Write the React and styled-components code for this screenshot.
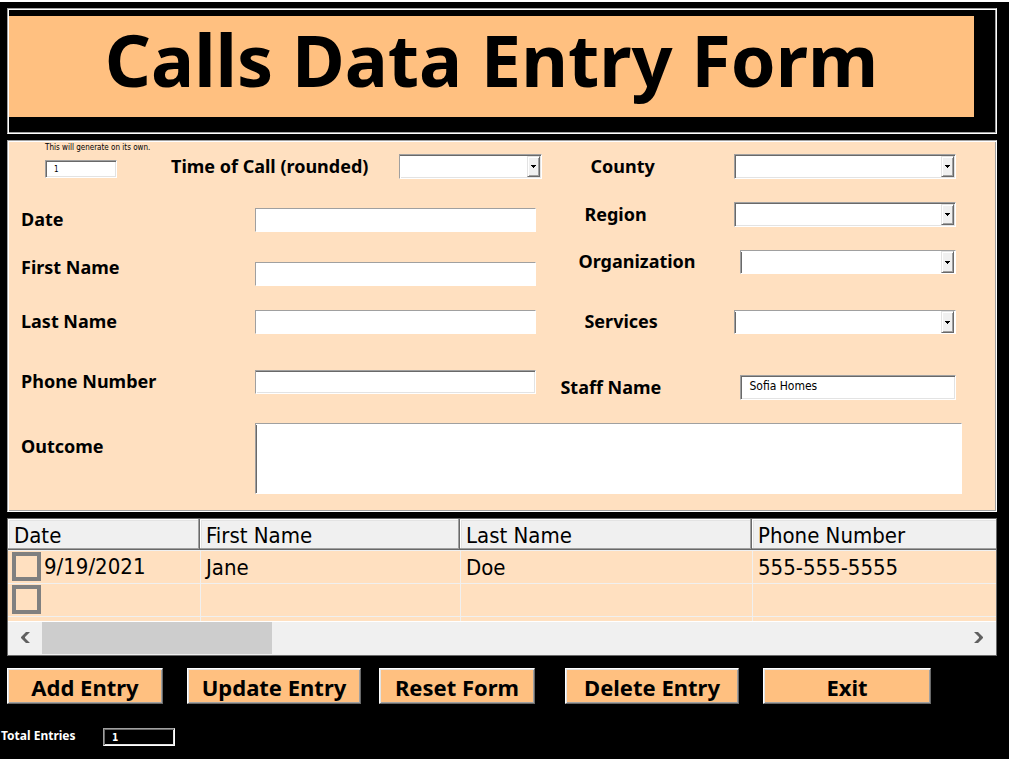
import React from "react";
import styled, { createGlobalStyle, css } from "styled-components";

const c = {
  peach: "#ffe0c0",
  orange: "#ffc080",
  face: "#f0f0f0",
  light: "#e3e3e3",
  mid: "#a0a0a0",
  dark: "#696969",
};

const boldFont = `"Noto Sans", "DejaVu Sans Condensed", sans-serif`;

const GlobalStyle = createGlobalStyle`
  * { box-sizing: border-box; }
  body {
    margin: 0;
    background: #000;
    color: #000;
  }
  body, button, input, select, textarea, table {
    font-family: "DejaVu Sans Condensed", "DejaVu Sans", Tahoma, sans-serif;
    font-stretch: condensed;
  }
`;

const Page = styled.main`
  min-height: 100vh;
  border-top: 2px solid #fff;
  padding: 6px 12px 12px 7px;
  background: #000;
`;

const etched = css`
  border: 1px solid;
  border-color: ${c.mid} #fff #fff ${c.mid};
  box-shadow: inset 1px 1px 0 #fff, inset -1px -1px 0 ${c.mid};
`;

const sunken = css`
  border: 1px solid;
  border-color: ${c.mid} #fff #fff ${c.mid};
  border-radius: 0;
  outline: none;
  box-shadow:
    inset 0 1px 0 ${(p) => (p.$flat || p.$flatTop ? "#fff" : c.dark)},
    inset 1px 0 0 ${(p) => (p.$flat || p.$flatLeft ? "#fff" : c.dark)},
    inset -1px -1px 0 ${(p) => (p.$flat || p.$flatTop ? "#fff" : c.light)};
`;

const Header = styled.header`
  ${etched}
  padding: 7px 22px 16px 1px;
`;

const Title = styled.h1`
  margin: 0;
  padding-bottom: 15px;
  background: ${c.orange};
  font-family: ${boldFont};
  font-stretch: normal;
  font-size: 72px;
  line-height: 86px;
  font-weight: 700;
  text-align: center;
  white-space: nowrap;
`;

const Panel = styled.form`
  ${etched}
  margin-top: 6px;
  padding: 1px 1px 17px;
  background: ${c.peach};
`;

const Columns = styled.div`
  display: grid;
  grid-template-columns: minmax(0, 4fr) minmax(0, 3fr);
  column-gap: 24px;
  padding-right: 39px;
`;

const Column = styled.div`
  display: flex;
  flex-direction: column;
  padding-top: ${(p) => p.$top || 0}px;
`;

const Row = styled.div`
  display: flex;
  align-items: ${(p) => p.$align || "center"};
  margin-top: ${(p) => p.$gap || 0}px;
`;

const FirstRow = styled(Row)`
  height: 37px;
  margin-right: -6px;
  padding-left: 36px;
`;

const StaggeredRow = styled(Row)`
  height: 30px;
  align-items: flex-start;

  & > input {
    align-self: flex-end;
  }
`;

const Label = styled.label`
  flex: none;
  width: ${(p) => p.$width || 246}px;
  padding-left: ${(p) => p.$indent || 0}px;
  padding-bottom: 2px;
  font-family: ${boldFont};
  font-stretch: normal;
  font-size: 18px;
  line-height: 22px;
  font-weight: 700;
  white-space: nowrap;
`;

const TextBox = styled.input`
  ${sunken}
  flex: 1;
  min-width: 0;
  height: ${(p) => p.$height || 24}px;
  padding: 0 8px 4px;
  background: #fff;
  font-size: 12px;
`;

const OutcomeBox = styled.textarea`
  ${sunken}
  flex: 1;
  height: 71px;
  padding: 4px 8px;
  background: #fff;
  font-size: 12px;
  resize: none;
`;

const OutcomeRow = styled(Row)`
  padding-right: 33px;

  & > label {
    margin-top: 12px;
  }
`;

const IdBlock = styled.div`
  width: 126px;
  padding-bottom: 1px;
`;

const IdNote = styled.label`
  display: block;
  margin-bottom: 7px;
  font-size: 8px;
  line-height: 10px;
  white-space: nowrap;
`;

const CounterBox = styled.input`
  ${sunken}
  display: block;
  width: 72px;
  height: 18px;
  padding: 0 8px;
  font-size: 8px;
  background: #fff;
`;

const SelectWrap = styled.span`
  position: relative;
  display: flex;
  flex: 1;
  min-width: 0;
`;

const SelectBox = styled.select`
  ${sunken}
  appearance: none;
  width: 100%;
  height: ${(p) => p.$height || 24}px;
  padding: 0 20px 0 8px;
  background: #fff;
  font-size: 12px;
`;

const SelectArrow = styled.span`
  position: absolute;
  top: ${(p) => (p.$flatTop ? 1 : 2)}px;
  right: 2px;
  bottom: ${(p) => (p.$flatTop ? 1 : 2)}px;
  width: 13px;
  display: flex;
  align-items: center;
  justify-content: center;
  border: 1px solid;
  border-color: ${c.light} ${c.dark} ${c.dark} ${c.light};
  box-shadow: inset 1px 1px 0 #fff, inset -1px -1px 0 ${c.mid};
  background: ${c.face};
  pointer-events: none;
`;

const Grid = styled.section`
  margin-top: 6px;
  border: 1px solid ${c.dark};
  background: ${c.peach};
`;

const GridView = styled.div`
  height: 102px;
  overflow: hidden;
`;

const Table = styled.table`
  width: 100%;
  table-layout: fixed;
  border-collapse: separate;
  border-spacing: 0;
  font-size: 22px;
`;

const HeadCell = styled.th`
  width: ${(p) => (p.$width ? `${p.$width}px` : "auto")};
  height: 31px;
  padding: 4px 6px 0;
  border-right: 1px solid ${c.dark};
  border-bottom: 1px solid ${c.dark};
  box-shadow: inset -1px -1px 0 ${c.mid}, inset 1px 1px 0 #fff, inset 2px 2px 0 ${c.light};
  background: ${c.face};
  font-weight: 400;
  line-height: 26px;
  text-align: left;
  white-space: nowrap;

  &:last-child {
    border-right: 0;
    box-shadow: inset 0 -1px 0 ${c.mid}, inset 1px 1px 0 #fff, inset 2px 2px 0 ${c.light};
  }
`;

const Cell = styled.td`
  height: 33px;
  padding: 2px 5px 0;
  border-top: 1px solid ${c.face};
  border-left: 1px solid ${c.face};
  line-height: 26px;
  white-space: nowrap;

  &:first-child {
    border-left: 0;
    padding: 0 4px 1px;
  }
`;

const CheckLabel = styled.label`
  display: flex;
  align-items: center;
  gap: 3px;
  line-height: 29px;
`;

const Check = styled.input`
  appearance: none;
  width: 29px;
  height: 29px;
  margin: 0;
  border: 4px solid #808080;
  background: transparent;
`;

const ScrollBar = styled.div`
  display: flex;
  height: 34px;
  border-top: 1px solid #fff;
  border-bottom: 1px solid ${c.face};
  background: ${c.face};
`;

const ScrollButton = styled.button`
  display: flex;
  align-items: center;
  justify-content: center;
  width: 34px;
  padding: 0;
  border: 0;
  background: ${c.face};
`;

const ScrollTrack = styled.div`
  flex: 1;
`;

const ScrollThumb = styled.div`
  width: 25%;
  height: 100%;
  background: #cdcdcd;
`;

const Toolbar = styled.div`
  display: flex;
  flex-wrap: wrap;
  margin-top: 12px;
`;

const ActionButton = styled.button`
  width: ${(p) => p.$width}px;
  height: 36px;
  margin-right: ${(p) => p.$after || 0}px;
  padding: 2px 0 0;
  border: 1px solid;
  border-color: #fff ${c.dark} ${c.dark} #fff;
  box-shadow: inset 1px 1px 0 ${c.light}, inset -1px -1px 0 ${c.mid};
  background: ${c.orange};
  color: #000;
  font-family: ${boldFont};
  font-stretch: normal;
  font-size: 22px;
  line-height: 30px;
  font-weight: 700;
  white-space: nowrap;
`;

const Footer = styled.footer`
  display: flex;
  align-items: center;
  margin: 24px 0 0 -6px;
  color: #fff;
`;

const TotalLabel = styled.label`
  width: 102px;
  padding-bottom: 2px;
  font-family: ${boldFont};
  font-stretch: normal;
  font-size: 12px;
  line-height: 16px;
  font-weight: 700;
`;

const TotalBox = styled(CounterBox)`
  background: #000;
  color: #fff;
  font-size: 10px;
  font-weight: 700;
  box-shadow: inset 1px 1px 0 ${c.dark}, inset -1px -1px 0 ${c.light};
`;

function Dropdown({ id, $height, $flatTop, $flatLeft }) {
  return (
    <SelectWrap>
      <SelectBox id={id} $height={$height} $flatTop={$flatTop} $flatLeft={$flatLeft} defaultValue="">
        <option value="" aria-label="None" />
      </SelectBox>
      <SelectArrow $flatTop={$flatTop}>
        <svg width="5" height="3" viewBox="0 0 5 3" shapeRendering="crispEdges" aria-hidden="true">
          <path d="M0 0h5v1H4v1H3v1H2V2H1V1H0z" fill="#000" />
        </svg>
      </SelectArrow>
    </SelectWrap>
  );
}

function Chevron({ right }) {
  return (
    <svg width="10" height="12" viewBox="0 0 10 12" aria-hidden="true">
      <path
        d={right ? "M0 0H4L9 5V6L4 11H0L5 6V5Z" : "M10 0H6L1 5V6L6 11H10L5 6V5Z"}
        fill="#606060"
      />
    </svg>
  );
}

const dropdowns = [
  { id: "county", label: "County", indent: 30, width: 174, height: 25 },
  { id: "region", label: "Region", indent: 24, width: 174, height: 25, gap: 23 },
  { id: "organization", label: "Organization", indent: 18, width: 180, gap: 23, flatTop: true },
  { id: "services", label: "Services", indent: 24, width: 174, gap: 36, flatTop: true },
];

const actions = [
  { label: "Add Entry", width: 156, after: 24 },
  { label: "Update Entry", width: 174, after: 18 },
  { label: "Reset Form", width: 156, after: 30 },
  { label: "Delete Entry", width: 174, after: 24 },
  { label: "Exit", width: 168 },
];

const entries = [
  { date: "9/19/2021", first: "Jane", last: "Doe", phone: "555-555-5555" },
  { date: "", first: "", last: "", phone: "" },
];

export default function App() {
  return (
    <Page>
      <GlobalStyle />
      <Header>
        <Title>Calls Data Entry Form</Title>
      </Header>

      <Panel onSubmit={(e) => e.preventDefault()}>
        <Columns>
          <Column>
            <FirstRow $align="flex-end">
              <IdBlock>
                <IdNote htmlFor="entry-id">This will generate on its own.</IdNote>
                <CounterBox id="entry-id" defaultValue="1" />
              </IdBlock>
              <Label htmlFor="time" $width={228}>Time of Call (rounded)</Label>
              <Dropdown id="time" $height={25} $flatLeft />
            </FirstRow>
            <Row $gap={29}>
              <Label htmlFor="date" $indent={12}>Date</Label>
              <TextBox id="date" $flat />
            </Row>
            <StaggeredRow $gap={24}>
              <Label htmlFor="first" $indent={12}>First Name</Label>
              <TextBox id="first" $flat />
            </StaggeredRow>
            <Row $gap={24}>
              <Label htmlFor="last" $indent={12}>Last Name</Label>
              <TextBox id="last" $flat />
            </Row>
            <Row $gap={36}>
              <Label htmlFor="phone" $indent={12}>Phone Number</Label>
              <TextBox id="phone" $flatLeft />
            </Row>
          </Column>

          <Column $top={12}>
            {dropdowns.map((d) => (
              <Row key={d.id} $gap={d.gap}>
                <Label htmlFor={d.id} $indent={d.indent} $width={d.width}>{d.label}</Label>
                <Dropdown id={d.id} $height={d.height} $flatTop={d.flatTop} />
              </Row>
            ))}
            <Row $gap={41}>
              <Label htmlFor="staff" $width={180}>Staff Name</Label>
              <TextBox id="staff" $height={25} defaultValue="Sofia Homes" />
            </Row>
          </Column>
        </Columns>

        <OutcomeRow $gap={23} $align="flex-start">
          <Label htmlFor="outcome" $indent={12}>Outcome</Label>
          <OutcomeBox id="outcome" $flatTop />
        </OutcomeRow>
      </Panel>

      <Grid>
        <GridView>
          <Table>
            <thead>
              <tr>
                <HeadCell $width={192}>Date</HeadCell>
                <HeadCell $width={260}>First Name</HeadCell>
                <HeadCell $width={292}>Last Name</HeadCell>
                <HeadCell>Phone Number</HeadCell>
              </tr>
            </thead>
            <tbody>
              {entries.map((e, i) => (
                <tr key={i}>
                  <Cell>
                    <CheckLabel>
                      <Check type="checkbox" aria-label={`Select row ${i + 1}`} />
                      {e.date}
                    </CheckLabel>
                  </Cell>
                  <Cell>{e.first}</Cell>
                  <Cell>{e.last}</Cell>
                  <Cell>{e.phone}</Cell>
                </tr>
              ))}
              <tr>
                <Cell />
                <Cell />
                <Cell />
                <Cell />
              </tr>
            </tbody>
          </Table>
        </GridView>
        <ScrollBar>
          <ScrollButton type="button" aria-label="Scroll left">
            <Chevron />
          </ScrollButton>
          <ScrollTrack>
            <ScrollThumb />
          </ScrollTrack>
          <ScrollButton type="button" aria-label="Scroll right">
            <Chevron right />
          </ScrollButton>
        </ScrollBar>
      </Grid>

      <Toolbar>
        {actions.map((a) => (
          <ActionButton key={a.label} type="button" $width={a.width} $after={a.after}>
            {a.label}
          </ActionButton>
        ))}
      </Toolbar>

      <Footer>
        <TotalLabel htmlFor="total">Total Entries</TotalLabel>
        <TotalBox id="total" defaultValue="1" readOnly />
      </Footer>
    </Page>
  );
}
